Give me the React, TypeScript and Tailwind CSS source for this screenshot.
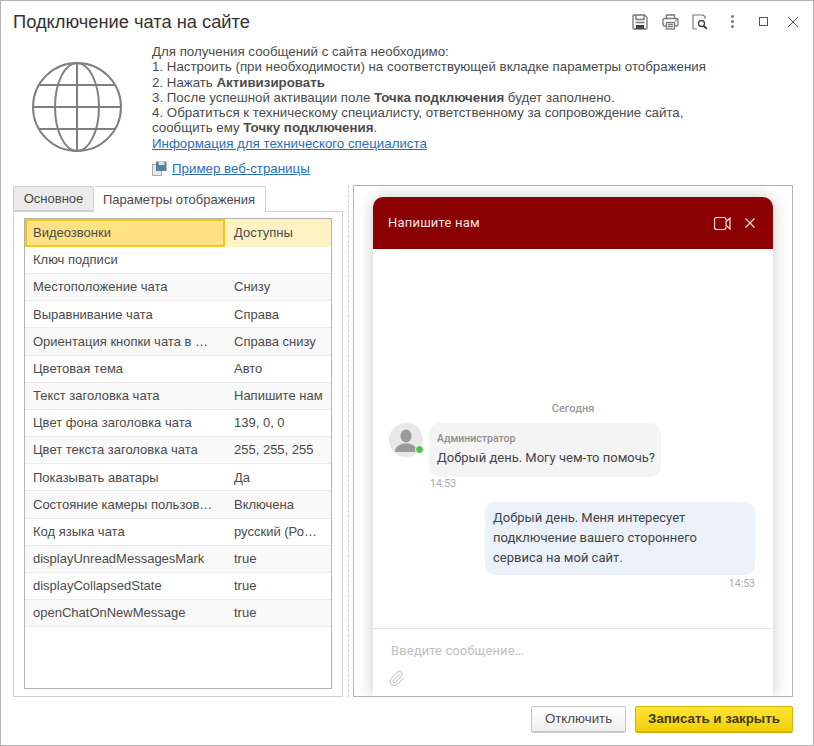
import { Paperclip } from 'lucide-react';

const rows = [
  ['Ключ подписи', ''],
  ['Местоположение чата', 'Снизу'],
  ['Выравнивание чата', 'Справа'],
  ['Ориентация кнопки чата в …', 'Справа снизу'],
  ['Цветовая тема', 'Авто'],
  ['Текст заголовка чата', 'Напишите нам'],
  ['Цвет фона заголовка чата', '139, 0, 0'],
  ['Цвет текста заголовка чата', '255, 255, 255'],
  ['Показывать аватары', 'Да'],
  ['Состояние камеры пользов…', 'Включена'],
  ['Код языка чата', 'русский (Ро…'],
  ['displayUnreadMessagesMark', 'true'],
  ['displayCollapsedState', 'true'],
  ['openChatOnNewMessage', 'true'],
];

function ToolbarIcons() {
  return (
    <div className="flex items-center text-[#555]">
      <svg width="16" height="16" viewBox="0 0 16 16" fill="none" stroke="#777" strokeWidth="1.3">
        <path d="M1 2a1 1 0 0 1 1-1h10.500L15 3.500V14a1 1 0 0 1-1 1H2a1 1 0 0 1-1-1z" />
        <path d="M4 1v4.500h8V1M3.500 8.500h9" />
        <rect x="4" y="11" width="8" height="4" fill="#444" stroke="none" />
      </svg>
      <svg className="ml-[14px]" width="17" height="16" viewBox="0 0 17 16" fill="none" stroke="#777" strokeWidth="1.3">
        <path d="M4.500 4.500V1h8v3.500" />
        <rect x="1" y="4.500" width="15" height="7.500" rx="1.500" />
        <rect x="4.500" y="8.500" width="8" height="6.500" fill="#fff" />
        <path d="M6 10.500h5M6 12.700h5M13 6.500h1.500" />
      </svg>
      <svg className="ml-[13px]" width="16" height="16" viewBox="0 0 16 16" fill="none" stroke="#777" strokeWidth="1.2">
        <path d="M5 15H2a1 1 0 0 1-1-1V1h10l2 1.500V5" />
        <circle cx="9.500" cy="9.500" r="3" stroke="#444" strokeWidth="1.400" />
        <path d="m11.800 11.800 3 3" stroke="#333" strokeWidth="1.800" />
      </svg>
      <div className="ml-[22px] flex w-[4px] flex-col items-center gap-[2px]">
        <span className="size-[3px] rounded-full bg-[#777]" />
        <span className="size-[3px] rounded-full bg-[#777]" />
        <span className="size-[3px] rounded-full bg-[#777]" />
      </div>
      <div className="ml-[25px] size-[9px] border border-[#555]" />
      <svg className="ml-[19px]" width="12" height="12" viewBox="0 0 12 12" stroke="#555" strokeWidth="1">
        <path d="m1 1 10 10M11 1 1 11" />
      </svg>
    </div>
  );
}

function Globe() {
  return (
    <svg width="90" height="90" viewBox="0 0 90 90" fill="none" stroke="#808080" strokeWidth="2">
      <circle cx="45" cy="45" r="44" />
      <ellipse cx="45" cy="45" rx="22" ry="44" />
      <path d="M45 1v88M1 45h88M7 23h76M7 67h76" />
    </svg>
  );
}

function Avatar() {
  return (
    <div className="relative size-[34px] shrink-0">
      <div className="flex size-[34px] items-center justify-center overflow-hidden rounded-full bg-[#e8e8e8]">
        <svg width="24" height="24" viewBox="0 0 24 24" fill="#9a9a9a">
          <ellipse cx="12" cy="8" rx="5.500" ry="6.500" />
          <path d="M1 24c0-6 5-7 8-8.500h6c3 1.500 8 2.500 8 8.500z" />
        </svg>
      </div>
      <span className="absolute right-[-1px] bottom-[3px] size-[9px] rounded-full border border-white bg-[#4fc14b]" />
    </div>
  );
}

function Chat() {
  return (
    <div className="mx-[19px] mt-[11px] flex h-[499px] flex-col overflow-hidden rounded-t-[10px] bg-white font-['Roboto',sans-serif] shadow-[0_0_16px_rgba(0,0,0,0.22)]">
      <div className="flex h-[52px] shrink-0 items-center justify-between bg-[#8b0000] pr-[18px] pl-[15px] text-white">
        <span className="text-[13px] tracking-[0.2px] opacity-90">Напишите нам</span>
        <div className="flex items-center gap-[14px] opacity-90">
          <svg width="17" height="13" viewBox="0 0 17 13" fill="none" stroke="#fff" strokeWidth="1.200">
            <path d="M12 3.500V2.500a2 2 0 0 0-2-2H2.500a2 2 0 0 0-2 2v8a2 2 0 0 0 2 2H10a2 2 0 0 0 2-2V9.500" />
            <path d="M12 4.800 16 1v11L12 8.200z" />
          </svg>
          <svg width="10" height="10" viewBox="0 0 10 10" stroke="#fff" strokeWidth="1.100">
            <path d="m0.500 0.500 9 9M9.500 0.500l-9 9" />
          </svg>
        </div>
      </div>
      <div className="flex min-h-0 flex-1 flex-col px-[16px]">
        <div className="mt-[153px] text-center text-[11px] leading-[14px] font-medium text-[#9a9a9a]">Сегодня</div>
        <div className="mt-[7px] flex gap-[6px]">
          <Avatar />
          <div className="h-[54px] w-[232px] rounded-[10px] bg-[#f4f4f5] pt-[9px] pl-[8px]">
            <div className="text-[10.500px] leading-[14px] font-medium text-[#8f8f8f]">Администратор</div>
            <div className="mt-[3px] text-[13px] leading-[18px] whitespace-nowrap text-[#444]">Добрый день. Могу чем-то помочь?</div>
          </div>
        </div>
        <div className="ml-[41px] text-[10.500px] leading-[14px] text-[#aaa]">14:53</div>
        <div className="mt-[11px] mr-[2px] ml-auto w-[270px] rounded-[10px] bg-[#eaf1f9] px-[8px] pt-[6px] pb-[7px] text-[13px] leading-[20px] text-[#444]">
          Добрый день. Меня интересует подключение вашего стороннего сервиса на мой сайт.
        </div>
        <div className="mt-[2px] mr-[2px] text-right text-[10.500px] leading-[14px] text-[#aaa]">14:53</div>
      </div>
      <div className="h-[68px] shrink-0 border-t border-[#e4e4e4] pt-[14px] pl-[15px]">
        <div className="pl-[3px] text-[13px] leading-[16px] tracking-[0.1px] text-[#c0c0c0]">Введите сообщение…</div>
        <Paperclip size={17} strokeWidth={1.300} className="mt-[11px] text-[#b0b0b0]" />
      </div>
    </div>
  );
}

export default function App() {
  return (
    <div className="h-[746px] w-[814px] overflow-hidden border border-[#b3b3b3] bg-white font-['Liberation_Sans',Arial,sans-serif] text-[#4b4b4b]">
      <div className="flex h-[43px] items-center justify-between pr-[14px] pb-[2px] pl-[12px]">
        <h1 className="text-[18.300px] leading-[24px] text-[#333]">Подключение чата на сайте</h1>
        <ToolbarIcons />
      </div>

      <div className="flex h-[141px] pl-[31px]">
        <div className="mt-[18px] w-[120px] shrink-0">
          <Globe />
        </div>
        <div className="text-[13.300px] leading-[15.300px]">
          <p>Для получения сообщений с сайта необходимо:</p>
          <p>1. Настроить (при необходимости) на соответствующей вкладке параметры отображения</p>
          <p>2. Нажать <b>Активизировать</b></p>
          <p>3. После успешной активации поле <b>Точка подключения</b> будет заполнено.</p>
          <p>4. Обратиться к техническому специалисту, ответственному за сопровождение сайта,</p>
          <p>сообщить ему <b>Точку подключения</b>.</p>
          <a className="text-[#2a6fb5] underline">Информация для технического специалиста</a>
          <div className="mt-[10px] flex items-center gap-[5px]">
            <svg width="15" height="15" viewBox="0 0 15 15">
              <path d="M0.500 3.500h9v11h-9z" fill="#e8e8e8" stroke="#999" strokeWidth="0.800" />
              <path d="M4 0.500h10.500v9.500H4z" fill="#5b7f9e" />
              <path d="M6.500 0.500h6v3.500h-6z" fill="#d5e0ea" />
            </svg>
            <a className="text-[#2a6fb5] underline">Пример веб-страницы</a>
          </div>
        </div>
      </div>

      <div className="flex pl-[12px]">
        <div className="flex w-[330px] shrink-0 flex-col pt-[1px]">
          <div className="relative z-10 flex h-[26px] text-[13px]">
            <div className="flex h-[25px] w-[81px] items-center justify-center rounded-t-[2px] border border-[#d0d0d0] bg-[#ebebeb]">Основное</div>
            <div className="flex h-[26px] w-[172px] items-center justify-center rounded-t-[2px] border border-b-0 border-l-0 border-[#d0d0d0] bg-white pr-[1px]">Параметры отображения</div>
          </div>
          <div className="-mt-px h-[486px] border border-[#d0d0d0] px-[10px] pt-[6px]">
            <div className="h-[471px] border border-[#b3b3b3] text-[13px]">
              <div className="flex h-[28px] bg-[#fff3c4]">
                <div className="flex w-[200px] items-center border-2 border-[#f5c51f] bg-[#ffe284] pl-[6px]">Видеозвонки</div>
                <div className="flex items-center pl-[9px]">Доступны</div>
              </div>
              {rows.map(([name, value], i) => (
                <div key={name} className={`flex h-[27.170px] items-center border-b border-[#ebebeb] ${i % 2 === 0 ? 'bg-white' : 'bg-[#f9f9f9]'}`}>
                  <div className="w-[200px] truncate pl-[8px]">{name}</div>
                  <div className="pl-[9px] whitespace-nowrap">{value}</div>
                </div>
              ))}
            </div>
          </div>
        </div>
        <div className="mx-[4.500px] w-px border-l border-dashed border-[#d0d0d0]" />
        <div className="h-[512px] w-[440px] overflow-hidden border border-[#b3b3b3]">
          <Chat />
        </div>
      </div>

      <div className="mt-[9px] flex justify-end gap-[9px] pr-[20px] text-[13.300px]">
        <button className="h-[26px] w-[95px] rounded-[2px] border border-[#c4c4c4] bg-gradient-to-b from-white to-[#f0f0f0] shadow-[0_1px_0_#ccc]">Отключить</button>
        <button className="h-[26px] w-[158px] rounded-[2px] border border-[#d4b500] bg-gradient-to-b from-[#ffe433] to-[#f2cf00] font-bold text-[#3f3a10] shadow-[0_1px_0_#c9ad00]">Записать и закрыть</button>
      </div>
    </div>
  );
}
